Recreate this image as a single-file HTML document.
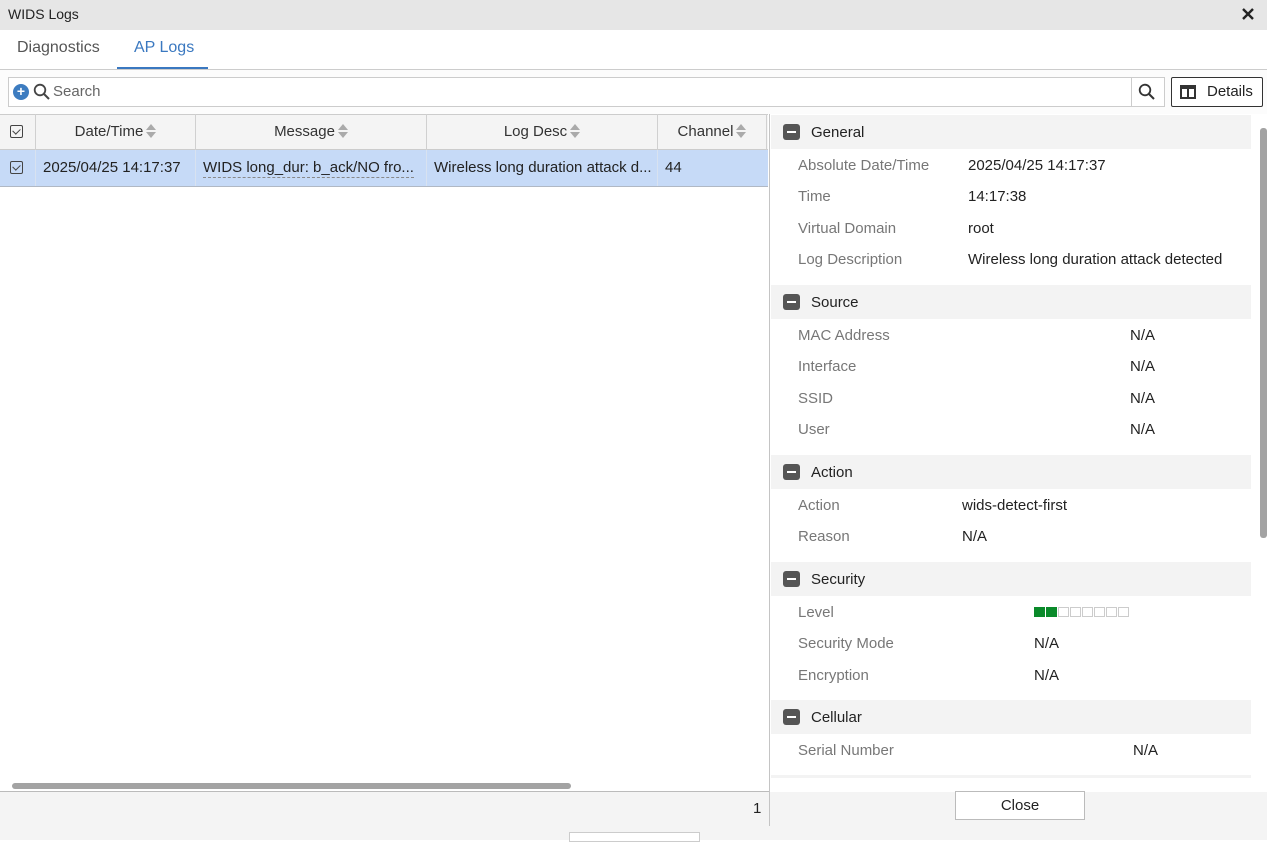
<!DOCTYPE html>
<html><head><meta charset="utf-8"><style>
*{box-sizing:border-box;margin:0;padding:0}
body{width:1267px;height:840px;position:relative;overflow:hidden;background:#fff;font-family:"Liberation Sans",sans-serif;font-size:15px;color:#222}
.a{position:absolute;white-space:nowrap}
.lbl{color:#777}
.sec{position:absolute;left:771px;width:480px;height:34px;background:#f3f3f3}
.sec i{position:absolute;left:12px;top:9px;width:17px;height:16px;background:#555;border-radius:3px}
.sec i:after{content:"";position:absolute;left:4px;top:7px;width:9px;height:2px;background:#fff}
.sec span{position:absolute;left:40px;top:9px;color:#222}
.th{position:absolute;top:114px;height:36px;border-right:1px solid #d0d0d0;text-align:center;line-height:36px;color:#333}
.sort{display:inline-block;width:10px;height:14px;vertical-align:-2px;margin-left:3px;position:relative}
.sort:before{content:"";position:absolute;left:0;top:0;border:5px solid transparent;border-top:0;border-bottom:6px solid #aaa}
.sort:after{content:"";position:absolute;left:0;top:8px;border:5px solid transparent;border-bottom:0;border-top:6px solid #aaa}
.cb{position:absolute;width:13px;height:13px;border:1.5px solid #444;border-radius:2px}
.cb:after{content:"";position:absolute;left:3px;top:1px;width:4px;height:6px;border-right:1.5px solid #444;border-bottom:1.5px solid #444;transform:rotate(45deg)}
.lv{position:absolute;top:607px;width:11px;height:10px;border:1px solid #ccc}
</style></head><body>
<div class="a" style="left:0;top:0;width:1267px;height:30px;background:#e6e6e6"></div>
<div class="a" style="left:8px;top:6px;font-size:14px">WIDS Logs</div>
<svg class="a" style="left:1242px;top:8px" width="12" height="12"><path d="M1 1L11 11M11 1L1 11" stroke="#222" stroke-width="2.4"/></svg>
<div class="a" style="left:17px;top:39px;font-size:16px;color:#555">Diagnostics</div>
<div class="a" style="left:134px;top:39px;font-size:16px;color:#3a78c0">AP Logs</div>
<div class="a" style="left:117px;top:67px;width:91px;height:3px;background:#3a78c0"></div>
<div class="a" style="left:0;top:69px;width:1267px;height:1px;background:#ccc"></div>
<div class="a" style="left:0;top:70px;width:1267px;height:44px;background:#fcfcfc"></div>
<div class="a" style="left:8px;top:77px;width:1157px;height:30px;border:1px solid #ccc;background:#fff"></div>
<div class="a" style="left:1131px;top:78px;width:1px;height:28px;background:#ccc"></div>
<div class="a" style="left:13px;top:84px;width:16px;height:16px;border-radius:50%;background:#3d7cc0;color:#fff;font-size:14px;line-height:15px;text-align:center;font-weight:bold">+</div>
<svg class="a" style="left:33px;top:83px" width="18" height="18"><circle cx="7" cy="7" r="5.3" fill="none" stroke="#444" stroke-width="1.8"/><path d="M11 11l5 5" stroke="#444" stroke-width="2"/></svg>
<div class="a" style="left:53px;top:83px;color:#666">Search</div>
<svg class="a" style="left:1138px;top:83px" width="18" height="18"><circle cx="7" cy="7" r="5.3" fill="none" stroke="#333" stroke-width="1.8"/><path d="M11 11l5 5" stroke="#333" stroke-width="2"/></svg>
<div class="a" style="left:1171px;top:77px;width:92px;height:30px;border:1px solid #333;border-radius:2px;background:#fff"></div>
<div class="a" style="left:1180px;top:85px;width:16px;height:14px;background:#333"></div>
<div class="a" style="left:1182px;top:89px;width:5px;height:8px;background:#fff"></div>
<div class="a" style="left:1189px;top:89px;width:5px;height:8px;background:#fff"></div>
<div class="a" style="left:1207px;top:83px">Details</div>
<div class="a" style="left:0;top:114px;width:768px;height:36px;background:#f4f4f4;border-top:1px solid #ccc;border-bottom:1px solid #ccc"></div>
<div class="th" style="left:0;width:36px"></div>
<div class="cb" style="left:10px;top:125px"></div>
<div class="th" style="left:36px;width:160px">Date/Time<span class="sort"></span></div>
<div class="th" style="left:196px;width:231px">Message<span class="sort"></span></div>
<div class="th" style="left:427px;width:231px">Log Desc<span class="sort"></span></div>
<div class="th" style="left:658px;width:109px">Channel<span class="sort"></span></div>
<div class="a" style="left:0;top:150px;width:768px;height:37px;background:#c6daf7;border-bottom:1px solid #b0b8c4"></div>
<div class="a" style="left:35px;top:150px;width:1px;height:36px;background:#d8e2f0"></div>
<div class="a" style="left:195px;top:150px;width:1px;height:36px;background:#d8e2f0"></div>
<div class="a" style="left:426px;top:150px;width:1px;height:36px;background:#d8e2f0"></div>
<div class="a" style="left:657px;top:150px;width:1px;height:36px;background:#d8e2f0"></div>
<div class="cb" style="left:10px;top:161px"></div>
<div class="a" style="left:43px;top:159px">2025/04/25 14:17:37</div>
<div class="a" style="left:203px;top:159px;border-bottom:1px dashed #888;line-height:18px">WIDS long_dur: b_ack/NO fro...</div>
<div class="a" style="left:434px;top:159px">Wireless long duration attack d...</div>
<div class="a" style="left:665px;top:159px">44</div>
<div class="a" style="left:12px;top:783px;width:559px;height:6px;border-radius:3px;background:#a3a3a3"></div>
<div class="a" style="left:0;top:791px;width:769px;height:1px;background:#bbb"></div>
<div class="a" style="left:0;top:792px;width:1267px;height:48px;background:#f4f4f4"></div>
<div class="a" style="left:753px;top:800px">1</div>
<div class="a" style="left:569px;top:832px;width:131px;height:10px;background:#fff;border:1px solid #ccc"></div>
<div class="a" style="left:769px;top:114px;width:1px;height:712px;background:#c4c4c4"></div>
<div class="a" style="left:770px;top:114px;width:497px;height:664px;background:#fff"></div>
<div class="sec" style="top:115px"><i></i><span>General</span></div>
<div class="a lbl" style="left:798px;top:157px">Absolute Date/Time</div><div class="a" style="left:968px;top:157px">2025/04/25 14:17:37</div>
<div class="a lbl" style="left:798px;top:188px">Time</div><div class="a" style="left:968px;top:188px">14:17:38</div>
<div class="a lbl" style="left:798px;top:220px">Virtual Domain</div><div class="a" style="left:968px;top:220px">root</div>
<div class="a lbl" style="left:798px;top:251px">Log Description</div><div class="a" style="left:968px;top:251px">Wireless long duration attack detected</div>
<div class="sec" style="top:285px"><i></i><span>Source</span></div>
<div class="a lbl" style="left:798px;top:327px">MAC Address</div><div class="a" style="left:1130px;top:327px">N/A</div>
<div class="a lbl" style="left:798px;top:358px">Interface</div><div class="a" style="left:1130px;top:358px">N/A</div>
<div class="a lbl" style="left:798px;top:390px">SSID</div><div class="a" style="left:1130px;top:390px">N/A</div>
<div class="a lbl" style="left:798px;top:421px">User</div><div class="a" style="left:1130px;top:421px">N/A</div>
<div class="sec" style="top:455px"><i></i><span>Action</span></div>
<div class="a lbl" style="left:798px;top:497px">Action</div><div class="a" style="left:962px;top:497px">wids-detect-first</div>
<div class="a lbl" style="left:798px;top:528px">Reason</div><div class="a" style="left:962px;top:528px">N/A</div>
<div class="sec" style="top:562px"><i></i><span>Security</span></div>
<div class="a lbl" style="left:798px;top:604px">Level</div>
<div class="lv" style="left:1034px;background:#0a8a2a;border-color:#0a8a2a"></div>
<div class="lv" style="left:1046px;background:#0a8a2a;border-color:#0a8a2a"></div>
<div class="lv" style="left:1058px"></div><div class="lv" style="left:1070px"></div><div class="lv" style="left:1082px"></div><div class="lv" style="left:1094px"></div><div class="lv" style="left:1106px"></div><div class="lv" style="left:1118px"></div>
<div class="a lbl" style="left:798px;top:635px">Security Mode</div><div class="a" style="left:1034px;top:635px">N/A</div>
<div class="a lbl" style="left:798px;top:667px">Encryption</div><div class="a" style="left:1034px;top:667px">N/A</div>
<div class="sec" style="top:700px"><i></i><span>Cellular</span></div>
<div class="a lbl" style="left:798px;top:742px">Serial Number</div><div class="a" style="left:1133px;top:742px">N/A</div>
<div class="sec" style="top:775px;height:3px"></div>
<div class="a" style="left:1260px;top:128px;width:7px;height:410px;border-radius:3px;background:#a3a3a3"></div>
<div class="a" style="left:955px;top:791px;width:130px;height:29px;border:1px solid #bbb;background:#fff;text-align:center;line-height:28px">Close</div>
</body></html>
